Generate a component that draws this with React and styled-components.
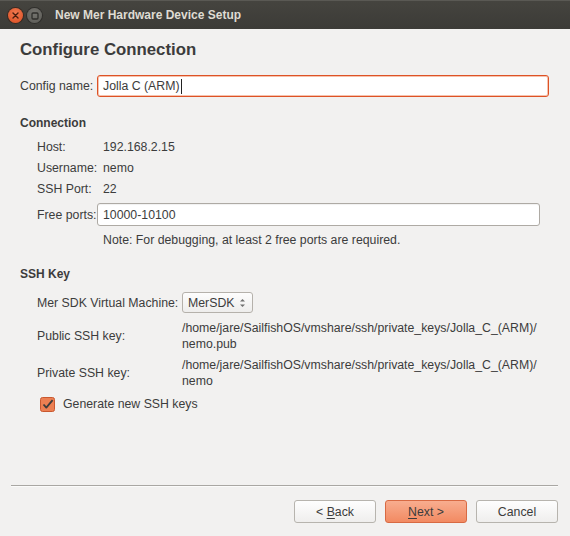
import React from "react";
import styled, { createGlobalStyle } from "styled-components";

const GlobalStyle = createGlobalStyle`
  html, body {
    margin: 0;
    padding: 0;
    background: #f2f1f0;
  }
  body {
    font-family: "Liberation Sans", Arial, sans-serif;
    font-size: 12.3px;
    color: #3c3c3c;
  }
`;

// whole dialog window
const Window = styled.div`
  width: 570px;
  height: 536px;
  display: flex;
  flex-direction: column;
  background: #f2f1f0;
  overflow: hidden;
`;

// title bar with window buttons
const TitleBar = styled.div`
  height: 29px;
  flex-shrink: 0;
  display: flex;
  align-items: center;
  padding-left: 8px;
  gap: 4px;
  background: linear-gradient(#45443f, #3c3b37);
  border-top: 1px solid #5a5954;
  box-sizing: border-box;
`;

const WinButton = styled.div`
  width: 15px;
  height: 15px;
  border-radius: 50%;
  display: flex;
  align-items: center;
  justify-content: center;
  margin-top: 1px;
  background: ${(p) =>
    p.close
      ? "radial-gradient(circle at 50% 35%, #f27a51, #dc4c1f)"
      : "radial-gradient(circle at 50% 35%, #75746f, #5b5a55)"};
  box-shadow: 0 0 0 1px ${(p) => (p.close ? "#3a2a22" : "#2f2e2b")};
`;

const Title = styled.div`
  margin-left: 9px;
  font-weight: bold;
  font-size: 12px;
  color: #dfdbd2;
`;

const Body = styled.div`
  flex: 1;
  padding: 0 21px 0 20px;
  display: flex;
  flex-direction: column;
`;

const Heading = styled.h1`
  margin: 11px 0 0;
  font-size: 16.8px;
  line-height: 20px;
  font-weight: bold;
  color: #3c3c3c;
`;

const NameRow = styled.div`
  margin-top: 15px;
  display: flex;
  align-items: center;
  height: 22px;
`;

const NameLabel = styled.div`
  width: 77px;
  flex-shrink: 0;
`;

const TextInput = styled.div`
  flex: 1;
  height: ${(p) => p.h || 22}px;
  box-sizing: border-box;
  display: flex;
  align-items: center;
  padding-left: 5px;
  background: #fff;
  border-radius: 3px;
  border: 1px solid ${(p) => (p.focused ? "#dd5226" : "#aeaaa4")};
  box-shadow: ${(p) =>
    p.focused ? "inset 0 0 0 1px #f7c2ad" : "inset 0 1px 1px rgba(0,0,0,0.06)"};
  margin-right: ${(p) => p.mr || 0}px;
`;

const Caret = styled.span`
  display: inline-block;
  width: 1px;
  height: 15px;
  background: #222;
  margin-left: 1px;
`;

const SectionTitle = styled.div`
  margin-top: ${(p) => p.mt}px;
  font-weight: bold;
  font-size: 12px;
  line-height: 16px;
`;

const Grid = styled.div`
  margin-top: ${(p) => p.mt || 0}px;
  padding-left: 17px;
  display: grid;
  grid-template-columns: ${(p) => p.labelWidth}px 1fr;
  align-items: center;
`;

const Label = styled.div`
  height: ${(p) => p.h}px;
  margin-top: ${(p) => p.mt || 0}px;
  display: flex;
  align-items: center;
`;

const Value = styled.div`
  height: ${(p) => p.h}px;
  margin-top: ${(p) => p.mt || 0}px;
  display: flex;
  align-items: center;
  padding-left: ${(p) => p.pl || 0}px;
`;

const PathValue = styled.div`
  margin-top: ${(p) => p.mt || 0}px;
  line-height: 16px;
`;

const Combo = styled.div`
  width: 71px;
  height: 21px;
  box-sizing: border-box;
  border: 1px solid #b5b1ab;
  border-radius: 3px;
  background: linear-gradient(#fdfdfd, #eeedec);
  display: flex;
  align-items: center;
  justify-content: space-between;
  padding: 0 6px 0 5px;
`;

const CheckRow = styled.div`
  margin-top: 5px;
  padding-left: 20px;
  height: 20px;
  display: flex;
  align-items: center;
  gap: 8px;
`;

const Footer = styled.div`
  padding: 0 12px 13px 11px;
  display: flex;
  flex-direction: column;
`;

const Separator = styled.div`
  height: 1px;
  background: #a9a7a3;
  border-bottom: 1px solid #fbfbfa;
  margin-bottom: 13px;
`;

const ButtonBar = styled.div`
  display: flex;
  justify-content: flex-end;
  gap: 9px;
`;

const Button = styled.div`
  width: 82px;
  height: 23px;
  box-sizing: border-box;
  border-radius: 3px;
  display: flex;
  align-items: center;
  justify-content: center;
  border: 1px solid ${(p) => (p.primary ? "#d86a43" : "#b7b4ae")};
  background: ${(p) =>
    p.primary
      ? "linear-gradient(#f8ad8f, #f28a62)"
      : "linear-gradient(#fefefe, #efeeed)"};
  color: #3c3c3c;
`;

const Mnemonic = styled.span`
  text-decoration: underline;
  text-underline-offset: 2px;
`;

const CloseIcon = () => (
  <svg width="7" height="7" viewBox="0 0 7 7">
    <path d="M1 1L6 6M6 1L1 6" stroke="#4a1d0e" strokeWidth="1.4" strokeLinecap="round" />
  </svg>
);

const MaxIcon = () => (
  <svg width="8" height="8" viewBox="0 0 8 8">
    <rect x="1" y="1" width="6" height="6" rx="1" fill="none" stroke="#2f2e2b" strokeWidth="1.3" />
  </svg>
);

const SpinArrows = () => (
  <svg width="7" height="12" viewBox="0 0 7 12">
    <path d="M1 4.5L3.5 2L6 4.5Z" fill="#6f6f6f" />
    <path d="M1 7.5L3.5 10L6 7.5Z" fill="#6f6f6f" />
  </svg>
);

const CheckBox = () => (
  <svg width="15" height="15" viewBox="0 0 15 15">
    <rect x="0.5" y="0.5" width="14" height="14" rx="2" fill="#ec7f52" stroke="#c9582f" />
    <path d="M3.5 7.5L6.3 10.6L12.6 3.2" fill="none" stroke="#3c3c3c" strokeWidth="1.8" strokeLinejoin="round" />
  </svg>
);

const App = () => {
  return (
    <>
      <GlobalStyle />
      <Window>
        <TitleBar>
          <WinButton close>
            <CloseIcon />
          </WinButton>
          <WinButton>
            <MaxIcon />
          </WinButton>
          <Title>New Mer Hardware Device Setup</Title>
        </TitleBar>

        <Body>
          <Heading>Configure Connection</Heading>

          <NameRow>
            <NameLabel>Config name:</NameLabel>
            <TextInput focused>
              Jolla C (ARM)
              <Caret />
            </TextInput>
          </NameRow>

          {/* connection section */}
          <SectionTitle mt={18}>Connection</SectionTitle>
          <Grid labelWidth={60} mt={5}>
            <Label h={21}>Host:</Label>
            <Value h={21} pl={6}>192.168.2.15</Value>
            <Label h={21}>Username:</Label>
            <Value h={21} pl={6}>nemo</Value>
            <Label h={21}>SSH Port:</Label>
            <Value h={21} pl={6}>22</Value>
            <Label h={23} mt={4}>Free ports:</Label>
            <Value h={23} mt={4}>
              <TextInput h={23} mr={9}>10000-10100</TextInput>
            </Value>
            <span />
            <Value h={20} mt={4} pl={6}>
              Note: For debugging, at least 2 free ports are required.
            </Value>
          </Grid>

          {/* ssh key section */}
          <SectionTitle mt={16}>SSH Key</SectionTitle>
          <Grid labelWidth={145} mt={10}>
            <Label h={21}>Mer SDK Virtual Machine:</Label>
            <Value h={21}>
              <Combo>
                MerSDK
                <SpinArrows />
              </Combo>
            </Value>
            <Label h={32} mt={7}>Public SSH key:</Label>
            <PathValue mt={7}>
              /home/jare/SailfishOS/vmshare/ssh/private_keys/Jolla_C_(ARM)/
              <br />
              nemo.pub
            </PathValue>
            <Label h={32} mt={5}>Private SSH key:</Label>
            <PathValue mt={5}>
              /home/jare/SailfishOS/vmshare/ssh/private_keys/Jolla_C_(ARM)/
              <br />
              nemo
            </PathValue>
          </Grid>
          <CheckRow>
            <CheckBox />
            Generate new SSH keys
          </CheckRow>
        </Body>

        <Footer>
          <Separator />
          <ButtonBar>
            <Button>
              &lt;&nbsp;<Mnemonic>B</Mnemonic>ack
            </Button>
            <Button primary>
              <Mnemonic>N</Mnemonic>ext &gt;
            </Button>
            <Button>Cancel</Button>
          </ButtonBar>
        </Footer>
      </Window>
    </>
  );
};

export default App;
